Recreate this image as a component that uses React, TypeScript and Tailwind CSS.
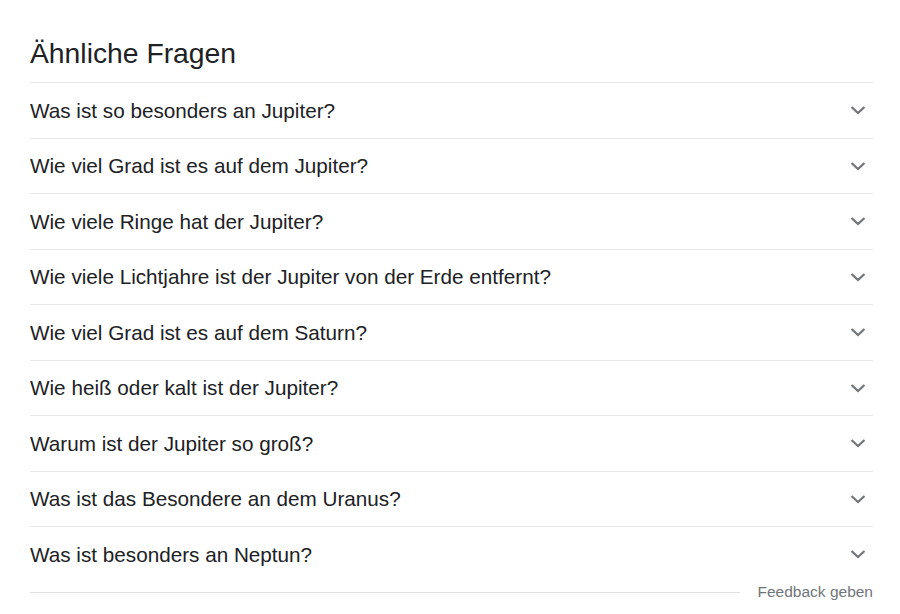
import React from 'react';

const questions = [
  'Was ist so besonders an Jupiter?',
  'Wie viel Grad ist es auf dem Jupiter?',
  'Wie viele Ringe hat der Jupiter?',
  'Wie viele Lichtjahre ist der Jupiter von der Erde entfernt?',
  'Wie viel Grad ist es auf dem Saturn?',
  'Wie heiß oder kalt ist der Jupiter?',
  'Warum ist der Jupiter so groß?',
  'Was ist das Besondere an dem Uranus?',
  'Was ist besonders an Neptun?',
];

const Chevron = () => (
  <svg width="16" height="10" viewBox="0 0 16 10" className="text-[#70757a]">
    <polyline points="1.5,2 8,8 14.5,2" fill="none" stroke="currentColor" strokeWidth="2.2" />
  </svg>
);

export default function App() {
  return (
    <div className="bg-white w-[900px] h-[614px] pl-[30px] pr-[27px]" style={{ fontFamily: '"Liberation Sans", Arial, sans-serif' }}>
      <div className="h-[82px] flex items-end pb-[12px]">
        <h2 className="text-[28.3px] leading-[34px] text-[#202124]">Ähnliche Fragen</h2>
      </div>
      <div>
        {questions.map((q) => (
          <div key={q} className="h-[55.5px] flex items-center justify-between border-t border-[#e8e8e8]">
            <span className="text-[20.7px] text-[#202124]">{q}</span>
            <span className="pr-[7px]"><Chevron /></span>
          </div>
        ))}
      </div>
      <div className="flex items-center h-[21px]">
        <div className="flex-1 border-t border-[#e0e0e0]" />
        <span className="ml-[18px] text-[15.5px] text-[#70757a]">Feedback geben</span>
      </div>
    </div>
  );
}
